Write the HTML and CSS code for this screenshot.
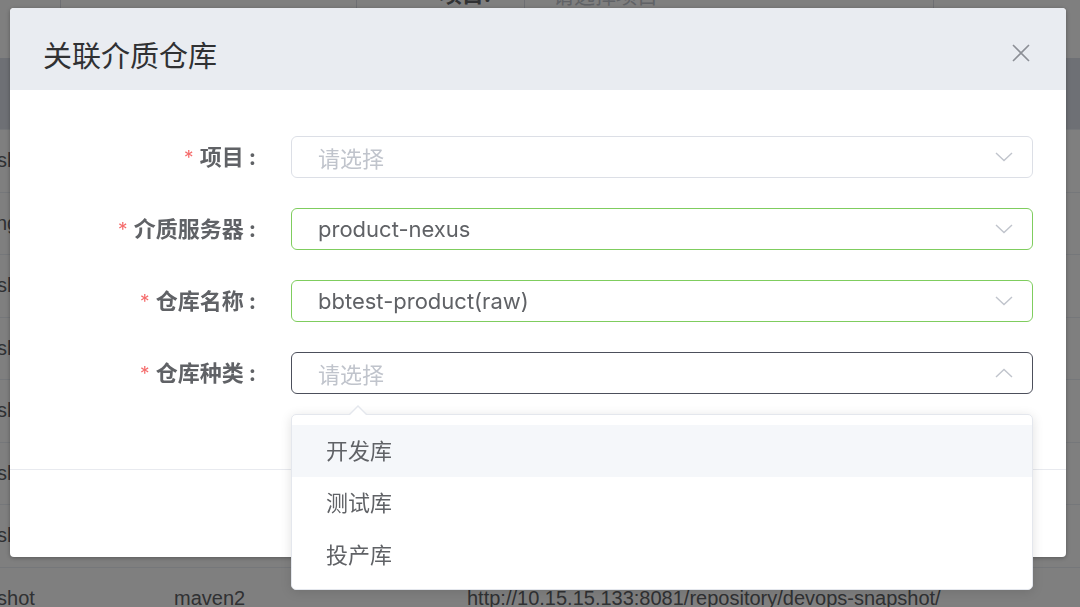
FILE: index.html
```html
<!DOCTYPE html>
<html lang="zh-CN">
<head>
<meta charset="utf-8">
<title>关联介质仓库</title>
<link rel="stylesheet" href="styles.css">
</head>
<body>
<div class="page">
  <div class="toolbar">
    <div class="tb-select tb-a">
      <span class="tb-ph"></span>
      <svg class="tb-arrow" viewBox="0 0 12 7" width="12" height="7"><polyline points="1,1 6,6 11,1" fill="none" stroke="#909399" stroke-width="1.3"/></svg>
    </div>
    <div class="tb-label">项目:</div>
    <div class="tb-select tb-b">
      <span class="tb-ph">请选择项目</span>
      <svg class="tb-arrow" viewBox="0 0 12 7" width="12" height="7"><polyline points="1,1 6,6 11,1" fill="none" stroke="#909399" stroke-width="1.3"/></svg>
    </div>
  </div>
  <div class="table">
    <div class="thead">
      <div class="cell">名称</div><div class="cell">格式</div><div class="cell">地址</div>
    </div>
    <div class="trow"><div class="cell">devops-snapshot</div><div class="cell">maven2</div><div class="cell">http://10.15.15.133:8081/repository/devops-snapshot/</div></div>
    <div class="trow"><div class="cell">devops-staging</div><div class="cell">maven2</div><div class="cell">http://10.15.15.133:8081/repository/devops-staging/</div></div>
    <div class="trow"><div class="cell">devops-snapshot</div><div class="cell">maven2</div><div class="cell">http://10.15.15.133:8081/repository/devops-snapshot/</div></div>
    <div class="trow"><div class="cell">devops-snapshot</div><div class="cell">maven2</div><div class="cell">http://10.15.15.133:8081/repository/devops-snapshot/</div></div>
    <div class="trow"><div class="cell">devops-snapshot</div><div class="cell">maven2</div><div class="cell">http://10.15.15.133:8081/repository/devops-snapshot/</div></div>
    <div class="trow"><div class="cell">devops-snapshot</div><div class="cell">maven2</div><div class="cell">http://10.15.15.133:8081/repository/devops-snapshot/</div></div>
    <div class="trow"><div class="cell">devops-snapshot</div><div class="cell">maven2</div><div class="cell">http://10.15.15.133:8081/repository/devops-snapshot/</div></div>
    <div class="trow"><div class="cell">devops-snapshot</div><div class="cell">maven2</div><div class="cell">http://10.15.15.133:8081/repository/devops-snapshot/</div></div>
  </div>
</div>

<div class="mask"></div>

<div class="dialog">
  <div class="dialog-header">
    <span class="dialog-title">关联介质仓库</span>
    <svg class="dialog-close" viewBox="0 0 18 18" width="18" height="18"><path d="M1 1 L17 17 M17 1 L1 17" stroke="#8c8f96" stroke-width="1.6" fill="none"/></svg>
  </div>
  <div class="dialog-body">
    <div class="form-item">
      <label class="form-label"><span class="req">*</span>项目<span class="colon">:</span></label>
      <div class="select">
        <span class="placeholder">请选择</span>
        <svg class="chev" viewBox="0 0 18 10" width="18" height="10"><polyline points="1,1 9,8.5 17,1" fill="none" stroke="#c0c4cc" stroke-width="1.4"/></svg>
      </div>
    </div>
    <div class="form-item">
      <label class="form-label"><span class="req">*</span>介质服务器<span class="colon">:</span></label>
      <div class="select ok">
        <span class="value">product-nexus</span>
        <svg class="chev" viewBox="0 0 18 10" width="18" height="10"><polyline points="1,1 9,8.5 17,1" fill="none" stroke="#c0c4cc" stroke-width="1.4"/></svg>
      </div>
    </div>
    <div class="form-item">
      <label class="form-label"><span class="req">*</span>仓库名称<span class="colon">:</span></label>
      <div class="select ok">
        <span class="value">bbtest-product(raw)</span>
        <svg class="chev" viewBox="0 0 18 10" width="18" height="10"><polyline points="1,1 9,8.5 17,1" fill="none" stroke="#c0c4cc" stroke-width="1.4"/></svg>
      </div>
    </div>
    <div class="form-item">
      <label class="form-label"><span class="req">*</span>仓库种类<span class="colon">:</span></label>
      <div class="select focus">
        <span class="placeholder">请选择</span>
        <svg class="chev" viewBox="0 0 18 10" width="18" height="10"><polyline points="1,9 9,1.5 17,9" fill="none" stroke="#c0c4cc" stroke-width="1.4"/></svg>
      </div>
    </div>
  </div>
  <div class="dialog-footer"></div>
</div>

<div class="dropdown">
  <div class="option hover">开发库</div>
  <div class="option">测试库</div>
  <div class="option">投产库</div>
</div>
</body>
</html>
```

FILE: styles.css
```css
* { box-sizing: border-box; }
html, body {
  margin: 0;
  padding: 0;
}
body {
  width: 1080px;
  height: 607px;
  overflow: hidden;
  position: relative;
  background: #ffffff;
  font-family: Inter, "Noto Sans CJK SC", sans-serif;
  color: #606266;
}

/* ---------- background page ---------- */
.page {
  width: 1080px;
}
.toolbar {
  margin-top: -27px;
  height: 85px;
  display: flex;
  align-items: flex-start;
  padding-left: 60px;
}
.tb-select {
  height: 42px;
  border: 1px solid #dcdfe6;
  border-radius: 4px;
  display: flex;
  align-items: center;
  justify-content: space-between;
  padding: 0 22px 0 28px;
  font-size: 21px;
}
.tb-a { width: 297px; }
.tb-b { width: 410px; }
.tb-ph { color: #c0c4cc; }
.tb-label {
  width: 167px;
  height: 42px;
  line-height: 42px;
  text-align: right;
  padding-right: 33px;
  font-size: 22px;
  font-weight: bold;
  color: #606266;
}

.table {
  margin-left: -117.5px;
  width: calc(100% + 117.5px);
  font-family: "Liberation Sans", "Noto Sans CJK SC", sans-serif;
  font-size: 20px;
  color: #606266;
}
.thead, .trow {
  display: grid;
  grid-template-columns: 291.5px 293px 1fr;
  align-items: center;
  border-bottom: 1px solid #ebeef5;
}
.thead {
  height: 72px;
  background: #dde1ea;
  font-weight: bold;
}
.trow {
  height: 62.5px;
}
.cell {
  white-space: nowrap;
}

.mask {
  position: fixed;
  inset: 0;
  background: rgba(0, 0, 0, 0.5);
}

/* ---------- dialog ---------- */
.dialog {
  position: absolute;
  left: 10px;
  top: 8px;
  width: 1056px;
  height: 549px;
  background: #ffffff;
  border-radius: 4px;
  box-shadow: 0 1px 4px rgba(0, 0, 0, 0.3);
  display: flex;
  flex-direction: column;
  overflow: hidden;
}
.dialog-header {
  background: #e9ecf1;
  padding: 32px 36px 17px 33px;
  height: 82px;
  display: flex;
  justify-content: space-between;
  align-items: flex-start;
}
.dialog-title {
  font-size: 29px;
  line-height: 33px;
  color: #303133;
}
.dialog-close {
  margin-top: 4px;
}
.dialog-body {
  padding: 46px 33px 75px 0;
  display: flex;
  flex-direction: column;
  gap: 30px;
}
.form-item {
  display: grid;
  grid-template-columns: 281px 1fr;
  align-items: center;
  height: 42px;
}
.form-label {
  text-align: right;
  padding-right: 35px;
  font-size: 22px;
  line-height: 26px;
  font-weight: bold;
  color: #606266;
  white-space: nowrap;
}
.colon {
  margin-left: 5px;
}
.req {
  display: inline-block;
  vertical-align: top;
  line-height: 27px;
  color: #f56c6c;
  font-weight: normal;
  margin-right: 6px;
  font-size: 19px;
}
.select {
  height: 42px;
  border: 1px solid #dcdfe6;
  border-radius: 6px;
  display: flex;
  align-items: center;
  justify-content: space-between;
  padding: 0 19px 0 26px;
  font-size: 22px;
}
.select.ok { border-color: #7fcd5e; }
.select.focus { border-color: #4c4f5b; }
.placeholder { color: #c0c4cc; }
.value { color: #606266; }

.dialog-footer {
  flex: 1;
  border-top: 1px solid #e8eaef;
}

/* ---------- dropdown ---------- */
.dropdown {
  position: absolute;
  left: 291px;
  top: 414px;
  width: 742px;
  height: 176px;
  background: #ffffff;
  border: 1px solid #e4e7ed;
  border-radius: 5px;
  box-shadow: 0 2px 12px rgba(0, 0, 0, 0.12);
  padding: 10px 0 8px;
}
.dropdown::before,
.dropdown::after {
  content: "";
  position: absolute;
  width: 0;
  height: 0;
  border-style: solid;
}
.dropdown::before {
  left: 56px;
  top: -10px;
  border-width: 0 10px 10px 10px;
  border-color: transparent transparent #e4e7ed transparent;
}
.dropdown::after {
  left: 57px;
  top: -8px;
  border-width: 0 9px 9px 9px;
  border-color: transparent transparent #ffffff transparent;
}
.option {
  height: 52px;
  line-height: 52px;
  padding-left: 34px;
  font-size: 22px;
  color: #606266;
}
.option.hover {
  background: #f5f7fa;
}
```
